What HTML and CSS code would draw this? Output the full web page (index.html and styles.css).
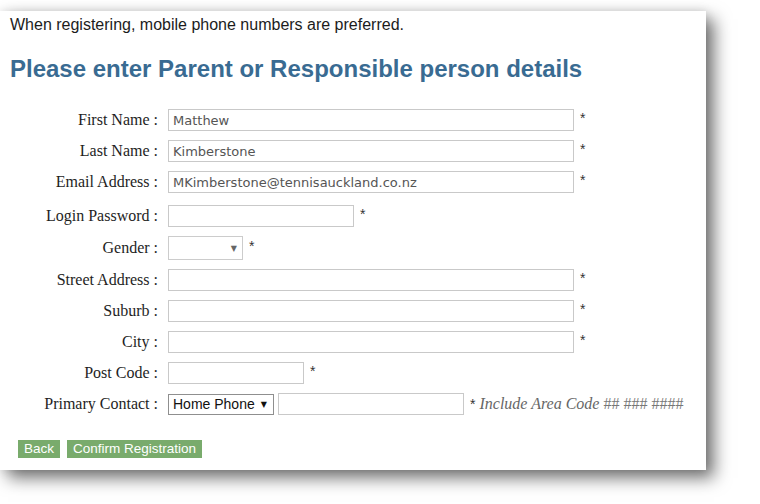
FILE: index.html
```html
<!DOCTYPE html>
<html>
<head>
<meta charset="utf-8">
<link rel="stylesheet" href="styles.css">
</head>
<body>
<div class="card">
  <p class="intro">When registering, mobile phone numbers are preferred.</p>
  <h1 class="title">Please enter Parent or Responsible person details</h1>
  <div class="form">
    <div class="row">
      <label class="lbl">First Name :</label>
      <input class="txt long" type="text" value="Matthew">
      <span class="req">*</span>
    </div>
    <div class="row">
      <label class="lbl">Last Name :</label>
      <input class="txt long" type="text" value="Kimberstone">
      <span class="req">*</span>
    </div>
    <div class="row">
      <label class="lbl">Email Address :</label>
      <input class="txt long" type="text" value="MKimberstone@tennisauckland.co.nz">
      <span class="req">*</span>
    </div>
    <div class="row row-pw">
      <label class="lbl">Login Password :</label>
      <input class="txt pw" type="password" value="">
      <span class="req">*</span>
    </div>
    <div class="row row-gender">
      <label class="lbl">Gender :</label>
      <span class="selwrap">
        <select class="sel gender"><option></option></select>
        <span class="arrow light">&#9660;</span>
      </span>
      <span class="req">*</span>
    </div>
    <div class="row">
      <label class="lbl">Street Address :</label>
      <input class="txt long" type="text" value="">
      <span class="req">*</span>
    </div>
    <div class="row">
      <label class="lbl">Suburb :</label>
      <input class="txt long" type="text" value="">
      <span class="req">*</span>
    </div>
    <div class="row">
      <label class="lbl">City :</label>
      <input class="txt long" type="text" value="">
      <span class="req">*</span>
    </div>
    <div class="row">
      <label class="lbl">Post Code :</label>
      <input class="txt post" type="text" value="">
      <span class="req">*</span>
    </div>
    <div class="row">
      <label class="lbl">Primary Contact :</label>
      <span class="selwrap">
        <select class="sel contact"><option>Home Phone</option></select>
        <span class="arrow dark">&#9660;</span>
      </span>
      <input class="txt phone" type="text" value="">
      <span class="req req-phone">*</span>
      <span class="hint">Include Area Code <span class="hash">## ### ####</span></span>
    </div>
  </div>
  <div class="buttons">
    <button class="btn">Back</button>
    <button class="btn">Confirm Registration</button>
  </div>
</div>
</body>
</html>
```
FILE: styles.css
```css
html, body {
  margin: 0;
  padding: 0;
  background: #ffffff;
}
body {
  width: 760px;
  height: 504px;
  overflow: hidden;
}
.card {
  margin-top: 11px;
  width: 706px;
  height: 459px;
  box-sizing: border-box;
  background: #ffffff;
  padding: 5px 0 0 10px;
  box-shadow: 8px 8px 16px rgba(0, 0, 0, 0.55), 0 0 10px rgba(0, 0, 0, 0.12);
}
.intro {
  margin: 0;
  font-family: "Liberation Sans", Arial, sans-serif;
  font-size: 16px;
  line-height: 18px;
  color: #1c1c1c;
}
.title {
  margin: 21px 0 0 0;
  font-family: "Liberation Sans", Arial, sans-serif;
  font-size: 24px;
  line-height: 28px;
  font-weight: bold;
  color: #396b92;
}
.form {
  margin-top: 26px;
  display: flex;
  flex-direction: column;
  gap: 9px;
}
.row {
  display: flex;
  align-items: center;
  height: 22px;
}
.row-pw {
  margin-top: 3px;
}
.row-gender {
  height: 24px;
}
.lbl {
  width: 148px;
  padding-right: 10px;
  text-align: right;
  font-family: "Liberation Serif", "Times New Roman", serif;
  font-size: 16px;
  color: #1e1e1e;
  white-space: nowrap;
}
.txt {
  box-sizing: border-box;
  height: 22px;
  margin: 0;
  border: 1px solid #c9c9c9;
  padding: 0 4px;
  font-family: "DejaVu Sans", Verdana, sans-serif;
  font-size: 13px;
  color: #555555;
  background: #ffffff;
  outline: none;
}
.long { width: 406px; }
.pw { width: 186px; }
.post { width: 136px; }
.phone { width: 186px; margin-left: 4px; }
.req {
  margin-left: 6px;
  margin-bottom: 4px;
  font-family: "Liberation Sans", Arial, sans-serif;
  font-size: 14px;
  color: #333333;
  line-height: 1;
}
.selwrap {
  position: relative;
  display: inline-block;
}
.sel {
  -webkit-appearance: none;
  appearance: none;
  box-sizing: border-box;
  margin: 0;
  display: block;
  background: #ffffff;
  font-family: "Liberation Sans", Arial, sans-serif;
  font-size: 14px;
  color: #111111;
  outline: none;
  border-radius: 0;
}
.gender {
  width: 75px;
  height: 24px;
  border: 1px solid #cccccc;
}
.contact {
  width: 106px;
  height: 21px;
  border: 1px solid #8f8f8f;
  padding: 0 0 0 4px;
}
.arrow {
  position: absolute;
  top: 50%;
  transform: translateY(-50%);
  font-family: "DejaVu Sans", sans-serif;
  font-size: 8px;
  pointer-events: none;
}
.arrow.light { right: 6px; color: #666666; }
.arrow.dark { right: 7px; color: #111111; }
.req-phone { margin-left: 6px; margin-bottom: 0; }
.hint {
  margin-left: 4px;
  font-family: "Liberation Serif", "Times New Roman", serif;
  font-style: italic;
  font-size: 16px;
  color: #666666;
}
.hash {
  font-style: normal;
  color: #777777;
  font-size: 16px;
}
.buttons {
  margin-top: 25px;
  margin-left: 8px;
  display: flex;
  gap: 7px;
}
.btn {
  margin: 0;
  border: none;
  border-radius: 0;
  background: #79ab6c;
  color: #ffffff;
  font-family: "Liberation Sans", Arial, sans-serif;
  font-size: 13.5px;
  height: 18px;
  line-height: 18px;
  padding: 0 6px;
}
```
